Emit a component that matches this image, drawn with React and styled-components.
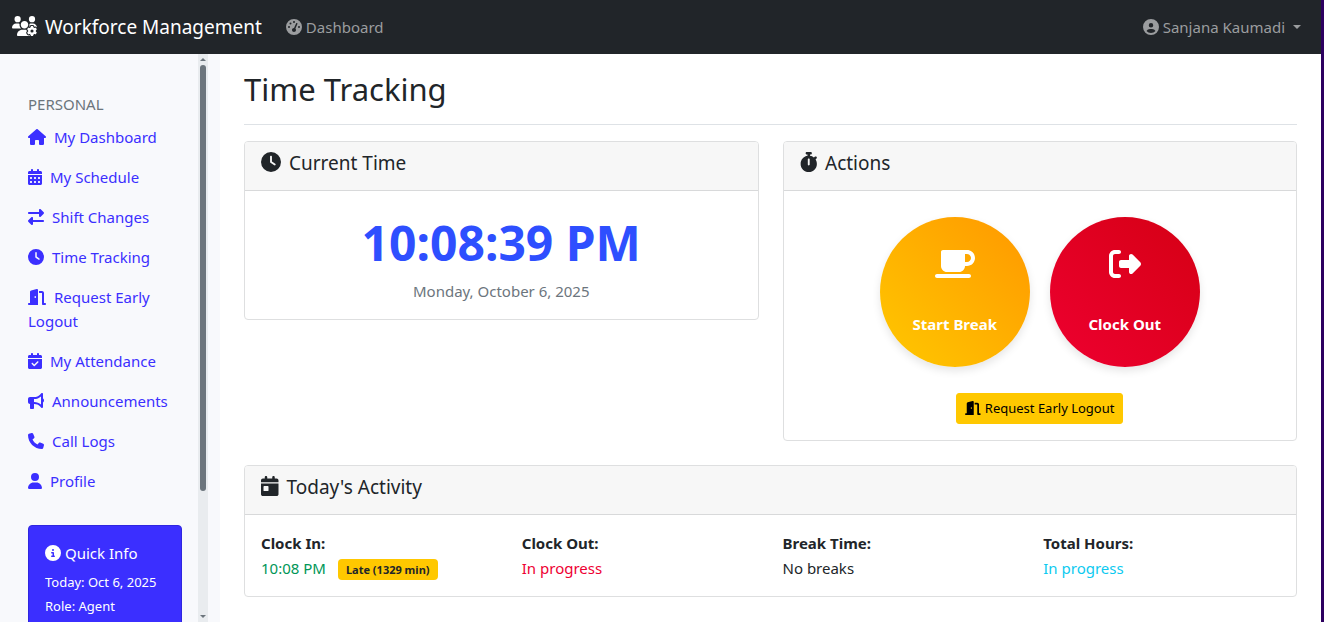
import React, { Component } from "react";
import styled, { createGlobalStyle } from "styled-components";
import { IconContext } from "react-icons";
import {
  FaBullhorn,
  FaCalendarCheck,
  FaCalendarDay,
  FaCalendarDays,
  FaCircleInfo,
  FaCircleUser,
  FaClock,
  FaDoorOpen,
  FaGaugeHigh,
  FaHouse,
  FaMugSaucer,
  FaPhone,
  FaRightFromBracket,
  FaRightLeft,
  FaStopwatch,
  FaUser,
  FaUsersGear
} from "react-icons/fa6";

const GlobalStyle = createGlobalStyle`
* {
  margin: 0;
  padding: 0;
  box-sizing: border-box;
}
body {
  background-color: #ffffff;
  color: #212529;
  font-family: "Noto Sans", sans-serif;
  font-size: 15px;
  line-height: 24px;
}
button {
  font: inherit;
  cursor: pointer;
}
a {
  text-decoration: none;
}
svg {
  width: auto;
  height: 16px;
  vertical-align: -2px;
}
`;

const Page = styled.div`
  display: flex;
  flex-direction: column;
  height: 100vh;
  overflow: hidden;
  border-right: 3px solid #2d0060;
`;

const Navbar = styled.header`
  display: flex;
  align-items: center;
  flex-shrink: 0;
  height: 54px;
  padding: 0 20px 0 12px;
  background-color: #212529;
`;

const Brand = styled.a`
  margin-right: 24px;
  color: #ffffff;
  font-size: 19px;
  svg {
    height: 20px;
    margin-right: 8px;
  }
`;

const TopLink = styled.a`
  color: #9b9d9f;
  svg {
    margin-right: 4px;
  }
`;

const UserMenu = styled.button`
  display: flex;
  align-items: center;
  margin-left: auto;
  border: 0;
  background: none;
  color: #9b9d9f;
  svg {
    margin-right: 4px;
  }
  &::after {
    content: "";
    margin-left: 8px;
    border-top: 4px solid;
    border-left: 4px solid transparent;
    border-right: 4px solid transparent;
  }
`;

const Layout = styled.div`
  display: flex;
  flex: 1;
  min-height: 0;
`;

const Sidebar = styled.aside`
  display: flex;
  flex-shrink: 0;
  width: 220px;
  padding-right: 12px;
  background-color: #f8f9fc;
`;

const SidebarBody = styled.div`
  flex: 1;
  padding: 38px 16px 0 28px;
  overflow: hidden;
`;

const Track = styled.div`
  display: flex;
  flex-direction: column;
  align-items: center;
  width: 10px;
  padding: 4px 0;
  background-color: #e9ecef;
`;

const Arrow = styled.span`
  border: 3px solid transparent;
  border-top: ${props => (props.$up ? "0" : "3px solid #6c757d")};
  border-bottom: ${props => (props.$up ? "3px solid #6c757d" : "0")};
`;

const Thumb = styled.div`
  width: 6px;
  height: 76%;
  margin: 4px 0 auto;
  border-radius: 3px;
  background-color: #6c757d;
`;

const SectionName = styled.h6`
  color: #6c757d;
  font-size: 15px;
  font-weight: 400;
  line-height: 25px;
  text-transform: uppercase;
`;

const SideLink = styled.a`
  display: block;
  padding: 8px 0;
  color: #3b2fff;
  svg {
    margin-right: 8px;
  }
`;

const QuickInfo = styled.div`
  margin-top: 24px;
  padding: 16px;
  border: 1px solid #2f26e0;
  border-radius: 4px;
  background-color: #3b2fff;
  color: #ffffff;
`;

const QuickTitle = styled.h6`
  margin-bottom: 6px;
  font-size: 15px;
  font-weight: 400;
  line-height: 22px;
  svg {
    margin-right: 4px;
  }
`;

const QuickLine = styled.p`
  font-size: 13px;
  white-space: nowrap;
`;

const Main = styled.main`
  flex: 1;
  min-width: 0;
  padding: 16px 24px;
  overflow: hidden;
`;

const Title = styled.h1`
  margin-bottom: 16px;
  padding-bottom: 16px;
  border-bottom: 1px solid #dee2e6;
  font-size: 31px;
  font-weight: 400;
  line-height: 38px;
`;

const Columns = styled.div`
  display: grid;
  grid-template-columns: 1fr 1fr;
  align-items: start;
  gap: 24px;
  margin-bottom: 24px;
`;

const Card = styled.section`
  border: 1px solid #dedfe0;
  border-radius: 4px;
  overflow: hidden;
`;

const CardTitle = styled.h5`
  padding: 9px 16px 15px;
  border-bottom: 1px solid #d8d9da;
  background-color: #f7f7f7;
  font-size: 19px;
  font-weight: 400;
  line-height: 24px;
  svg {
    height: 20px;
    margin-right: 8px;
  }
`;

const CardBody = styled.div`
  padding: 16px;
  text-align: ${props => (props.$center ? "center" : "left")};
`;

const Clock = styled.div`
  color: #2e4fff;
  font-size: 48px;
  font-weight: 700;
  line-height: 72px;
`;

const DateText = styled.p`
  color: #6c757d;
`;

const Rounds = styled.div`
  display: flex;
  justify-content: center;
  gap: 20px;
  margin: 10px 0 26px;
`;

const RoundButton = styled.button`
  display: flex;
  flex-direction: column;
  align-items: center;
  justify-content: center;
  gap: 32px;
  width: 150px;
  height: 150px;
  border: 0;
  border-radius: 50%;
  background: linear-gradient(45deg, ${props => props.$from}, ${props => props.$to});
  box-shadow: 0 4px 8px rgba(0, 0, 0, 0.1);
  color: #ffffff;
  font-weight: 700;
  svg {
    height: 32px;
  }
`;

const SmallButton = styled.button`
  padding: 4px 8px;
  border: 1px solid #ffc800;
  border-radius: 3px;
  background-color: #ffc800;
  color: #000000;
  font-size: 13px;
  line-height: 21px;
  svg {
    height: 14px;
    margin-right: 4px;
  }
`;

const Stats = styled.dl`
  display: grid;
  grid-template-columns: repeat(4, 1fr);
  gap: 24px;
`;

const StatName = styled.dt`
  font-weight: 700;
`;

const StatValue = styled.dd`
  display: flex;
  align-items: center;
  height: 25px;
  color: ${props => props.$color};
`;

const Badge = styled.span`
  margin: 4px 0 0 12px;
  padding: 4px 8px;
  border-radius: 4px;
  background-color: #ffc800;
  color: #212529;
  font-size: 11px;
  font-weight: 700;
  line-height: 13px;
`;

const links = [
  { name: "My Dashboard", icon: FaHouse },
  { name: "My Schedule", icon: FaCalendarDays },
  { name: "Shift Changes", icon: FaRightLeft },
  { name: "Time Tracking", icon: FaClock },
  { name: "Request Early Logout", icon: FaDoorOpen },
  { name: "My Attendance", icon: FaCalendarCheck },
  { name: "Announcements", icon: FaBullhorn },
  { name: "Call Logs", icon: FaPhone },
  { name: "Profile", icon: FaUser }
];

const stats = [
  { name: "Clock In:", value: "10:08 PM", color: "#009657", badge: "Late (1329 min)" },
  { name: "Clock Out:", value: "In progress", color: "#ee0033" },
  { name: "Break Time:", value: "No breaks", color: "#212529" },
  { name: "Total Hours:", value: "In progress", color: "#0dcaf0" }
];

// "auto" lets every icon keep the width of its own viewBox
const iconDefaults = { size: "auto" };

export default class App extends Component {
  render() {
    return (
      <IconContext.Provider value={iconDefaults}>
        <Page>
          <GlobalStyle />
          <Navbar>
            <Brand href="#">
              <FaUsersGear />
              Workforce Management
            </Brand>
            <TopLink href="#">
              <FaGaugeHigh />
              Dashboard
            </TopLink>
            <UserMenu type="button">
              <FaCircleUser />
              Sanjana Kaumadi
            </UserMenu>
          </Navbar>
          <Layout>
            <Sidebar>
              <SidebarBody>
                <SectionName>Personal</SectionName>
                <nav>
                  {links.map(({ name, icon: Icon }) => (
                    <SideLink href="#" key={name}>
                      <Icon />
                      {name}
                    </SideLink>
                  ))}
                </nav>
                <QuickInfo>
                  <QuickTitle>
                    <FaCircleInfo />
                    Quick Info
                  </QuickTitle>
                  <QuickLine>Today: Oct 6, 2025</QuickLine>
                  <QuickLine>Role: Agent</QuickLine>
                </QuickInfo>
              </SidebarBody>
              <Track aria-hidden="true">
                <Arrow $up />
                <Thumb />
                <Arrow />
              </Track>
            </Sidebar>
            <Main>
              <Title>Time Tracking</Title>
              <Columns>
                <Card>
                  <CardTitle>
                    <FaClock />
                    Current Time
                  </CardTitle>
                  <CardBody $center>
                    <Clock>10:08:39 PM</Clock>
                    <DateText>Monday, October 6, 2025</DateText>
                  </CardBody>
                </Card>
                <Card>
                  <CardTitle>
                    <FaStopwatch />
                    Actions
                  </CardTitle>
                  <CardBody $center>
                    <Rounds>
                      <RoundButton type="button" $from="#ffc800" $to="#ff9800">
                        <FaMugSaucer />
                        Start Break
                      </RoundButton>
                      <RoundButton type="button" $from="#ee0030" $to="#d50014">
                        <FaRightFromBracket />
                        Clock Out
                      </RoundButton>
                    </Rounds>
                    <SmallButton type="button">
                      <FaDoorOpen />
                      Request Early Logout
                    </SmallButton>
                  </CardBody>
                </Card>
              </Columns>
              <Card>
                <CardTitle>
                  <FaCalendarDay />
                  Today's Activity
                </CardTitle>
                <CardBody>
                  <Stats>
                    {stats.map(({ name, value, color, badge }) => (
                      <div key={name}>
                        <StatName>{name}</StatName>
                        <StatValue $color={color}>
                          {value}
                          {badge && <Badge>{badge}</Badge>}
                        </StatValue>
                      </div>
                    ))}
                  </Stats>
                </CardBody>
              </Card>
            </Main>
          </Layout>
        </Page>
      </IconContext.Provider>
    );
  }
}
